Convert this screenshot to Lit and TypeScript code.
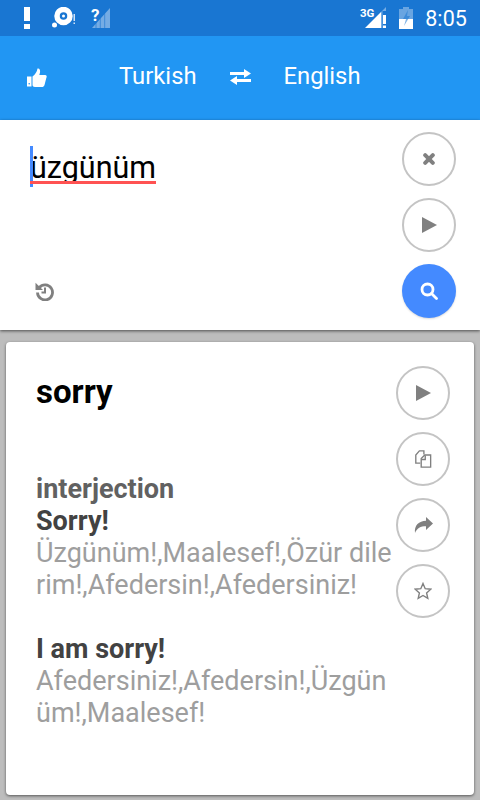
import {LitElement, html, css, svg} from 'lit';
import {customElement} from 'lit/decorators.js';

const playIcon = html`<svg width="15" height="16" viewBox="0 0 15 16"><path d="M0 0L15 8L0 16Z" fill="#808080"/></svg>`;

const circle = (content: unknown) => html`<div class="circle">${content}</div>`;

@customElement('app-root')
export class AppRoot extends LitElement {
  static styles = css`
    :host {
      display: block;
      width: 480px;
      height: 800px;
      overflow: hidden;
      background: #bdbdbd;
      font-family: Roboto, "Liberation Sans", sans-serif;
    }
    svg {
      display: block;
    }

    .status {
      height: 36px;
      background: #1976d2;
      display: flex;
      align-items: center;
      color: white;
    }
    .status-left {
      display: flex;
      align-items: center;
      margin-left: 24px;
      gap: 22px;
    }
    .status-right {
      display: flex;
      align-items: center;
      margin-left: auto;
      margin-right: 13px;
    }
    .status svg {
      margin-bottom: 1px;
    }
    .signal {
      position: relative;
      margin-left: -7px;
    }
    .signal span {
      position: absolute;
      left: 0;
      top: 0;
      font-size: 17px;
      line-height: 17px;
      font-weight: 700;
    }
    .clock {
      font-size: 21.5px;
      margin-left: 12px;
      letter-spacing: 0.1px;
    }

    .toolbar {
      height: 84px;
      background: #2196f3;
      display: flex;
      align-items: center;
      color: white;
      font-size: 23.8px;
      padding-left: 27px;
      box-sizing: border-box;
    }
    .thumb {
      margin-top: -1px;
    }
    .lang {
      display: flex;
      align-items: center;
      margin-left: 72px;
      margin-top: -4px;
    }
    .swap {
      margin: 2px 33px 0 33px;
    }

    .input-panel {
      height: 210px;
      background: white;
      display: flex;
      justify-content: space-between;
      box-sizing: border-box;
      padding: 12px 24px 12px 30px;
      box-shadow: 0 1px 3px rgba(0, 0, 0, 0.6);
      position: relative;
    }
    .input-left {
      display: flex;
      flex-direction: column;
      justify-content: space-between;
    }
    .word {
      display: inline-block;
      position: relative;
      margin-top: 18px;
      font-size: 30.5px;
      line-height: 35px;
      height: 35px;
      color: #000;
    }
    .word::before {
      content: "";
      position: absolute;
      left: 0;
      top: -4px;
      width: 3px;
      height: 41px;
      background: #448aff;
    }
    .word::after {
      content: "";
      position: absolute;
      left: 0;
      right: 0;
      top: 31px;
      height: 3px;
      background: #ff5252;
    }
    .history {
      margin: 0 0 17px 5px;
    }

    .buttons {
      display: flex;
      flex-direction: column;
      gap: 12px;
    }
    .circle {
      width: 54px;
      height: 54px;
      box-sizing: border-box;
      border: 2px solid #c4c4c4;
      border-radius: 50%;
      background: white;
      display: flex;
      align-items: center;
      justify-content: center;
    }
    .circle.search {
      background: #448aff;
      border: none;
      box-shadow: 0 1px 2px rgba(0, 0, 0, 0.15);
    }

    .card {
      margin: 12px 6px 0;
      height: 453px;
      background: white;
      border-radius: 4px;
      box-shadow: 0 1px 3px rgba(0, 0, 0, 0.55);
      box-sizing: border-box;
      padding: 24px 24px 0 30px;
      display: flex;
      justify-content: space-between;
    }
    .result {
      width: 358px;
      font-size: 27px;
      line-height: 32px;
      word-break: break-all;
    }
    .headword {
      font-size: 33px;
      line-height: 52px;
      font-weight: 700;
      color: #000;
      margin-bottom: 55px;
    }
    .pos {
      font-weight: 700;
      color: #616161;
    }
    .phrase {
      font-weight: 700;
      color: #424242;
    }
    .gloss {
      color: #9e9e9e;
      margin-bottom: 32px;
    }
  `;

  renderStatusBar() {
    return html`
      <div class="status">
        <div class="status-left">
          <svg width="6" height="22" viewBox="0 0 6 22"><path d="M0 0H6V14H0ZM0 17H6V22H0Z" fill="white"/></svg>
          <svg width="24" height="22" viewBox="0 0 24 22">
            <circle cx="11.500" cy="9" r="6.500" fill="none" stroke="white" stroke-width="5.500"/>
            <circle cx="11.500" cy="9" r="1.500" fill="white"/>
            <circle cx="2.500" cy="18" r="2.500" fill="white"/>
            <path d="M21.500 7H23V14H21.500ZM21.500 15.500H23V17H21.500Z" fill="white" opacity=".8"/>
          </svg>
          <div class="signal">
            <svg width="20" height="22" viewBox="0 0 20 22">
              <path d="M1 21L19 1V21Z" fill="white" opacity=".4"/>
              <path d="M5 21V15.700M9.300 21V11.200M13.700 21V6.600" stroke="#1976d2" stroke-width="1" opacity=".6"/>
            </svg>
            <span>?</span>
          </div>
        </div>
        <div class="status-right">
          <svg width="28" height="22" viewBox="0 0 28 22">
            <path d="M5 21L21 5V21Z" fill="white"/>
            <path d="M21 5L26 0V4H22.500V21H21Z" fill="white" opacity=".4"/>
            <path d="M23 8H26V17H23ZM23 18.500H26V21H23Z" fill="white"/>
            <text x="0" y="10" fill="white" font-size="11.500" font-weight="700" font-family="Roboto">3G</text>
          </svg>
          <svg width="14" height="22" viewBox="0 0 14 22" style="margin-left:11px">
            <path d="M4 0H10V2H14V22H0V2H4Z" fill="white" opacity=".35"/>
            <path d="M0 12H14V22H0Z" fill="white"/>
            <path d="M9 3L4 12H7L5 19L11 9H8Z" fill="#1976d2" opacity=".55"/>
          </svg>
          <span class="clock">8:05</span>
        </div>
      </div>
    `;
  }

  renderToolbar() {
    return html`
      <div class="toolbar">
        <svg class="thumb" width="20" height="19" viewBox="0 0 20 19">
          <path d="M0 8.500H4.500V18.500H0Z" fill="white"/>
          <path d="M5.500 8.500C8 6.500 10 4 10.500 0.500C12.500 0 13.500 2 13 4.500L12.300 7H18C20 7 20 9 19.300 10L17.500 17C17 18.500 16 19 15 19H8C6.500 19 5.500 18 5.500 17Z" fill="white"/>
          <circle cx="2.200" cy="15.800" r="0.800" fill="#2196f3"/>
        </svg>
        <div class="lang">
          <span>Turkish</span>
          <svg class="swap" width="21" height="16" viewBox="0 0 21 16">
            <path d="M0 3H14V0L21 4.500L14 9V6H0ZM21 10H7V7L0 11.500L7 16V13H21Z" fill="white"/>
          </svg>
          <span>English</span>
        </div>
      </div>
    `;
  }

  renderInputPanel() {
    return html`
      <div class="input-panel">
        <div class="input-left">
          <div><span class="word">üzgünüm</span></div>
          <svg class="history" width="19" height="19" viewBox="0 0 19 19">
            <path d="M4.300 5.500A7.500 7.500 0 1 1 2.500 10.500" fill="none" stroke="#808080" stroke-width="2.800"/>
            <path d="M0.500 0.800L8 8H0.500Z" fill="#808080"/>
            <path d="M10 5.500V10.500H6.500" fill="none" stroke="#808080" stroke-width="2"/>
          </svg>
        </div>
        <div class="buttons">
          ${circle(html`<svg width="12" height="12" viewBox="0 0 12 12"><path d="M2.200 2.200L9.800 9.800M9.800 2.200L2.200 9.800" stroke="#808080" stroke-width="4" stroke-linecap="round"/></svg>`)}
          ${circle(playIcon)}
          <div class="circle search">
            <svg width="18" height="18" viewBox="0 0 18 18">
              <circle cx="7.500" cy="7.500" r="5.500" fill="none" stroke="white" stroke-width="2.800"/>
              <path d="M11.500 11.500L16.500 16.500" stroke="white" stroke-width="2.800" stroke-linecap="round"/>
            </svg>
          </div>
        </div>
      </div>
    `;
  }

  renderCard() {
    const copyIcon = svg`
      <path d="M6.500 14.500H1.500V5.500L5.500 1H10.500V5" fill="none" stroke="#808080" stroke-width="1.500"/>
      <path d="M7.500 19V9.500L11.500 5.500H18V19Z" fill="white" stroke="#808080" stroke-width="1.500"/>
      <path d="M7.500 10.500H12V6" fill="none" stroke="#808080" stroke-width="1.500"/>
    `;
    return html`
      <div class="card">
        <div class="result">
          <div class="headword">sorry</div>
          <div class="pos">interjection</div>
          <div class="phrase">Sorry!</div>
          <div class="gloss">Üzgünüm!,Maalesef!,Özür dilerim!,Afedersin!,Afedersiniz!</div>
          <div class="phrase">I am sorry!</div>
          <div class="gloss">Afedersiniz!,Afedersin!,Üzgünüm!,Maalesef!</div>
        </div>
        <div class="buttons">
          ${circle(playIcon)}
          ${circle(html`<svg width="18" height="18" viewBox="0 0 19 20">${copyIcon}</svg>`)}
          ${circle(html`<svg width="19" height="16" viewBox="0 0 19 16"><path d="M12 0L19 6.500L12 13V9.200C6.500 9.200 3 11 1 16C0 8.500 5 4 12 3.800Z" fill="#808080"/></svg>`)}
          ${circle(html`<svg width="18" height="18" viewBox="0 0 18 18"><path d="M9 1.500L11.200 6.700L16.800 7.200L12.600 10.900L13.800 16.400L9 13.500L4.200 16.400L5.400 10.900L1.200 7.200L6.800 6.700Z" fill="none" stroke="#808080" stroke-width="1.400"/></svg>`)}
        </div>
      </div>
    `;
  }

  render() {
    return html`
      ${this.renderStatusBar()}
      ${this.renderToolbar()}
      ${this.renderInputPanel()}
      ${this.renderCard()}
    `;
  }
}
